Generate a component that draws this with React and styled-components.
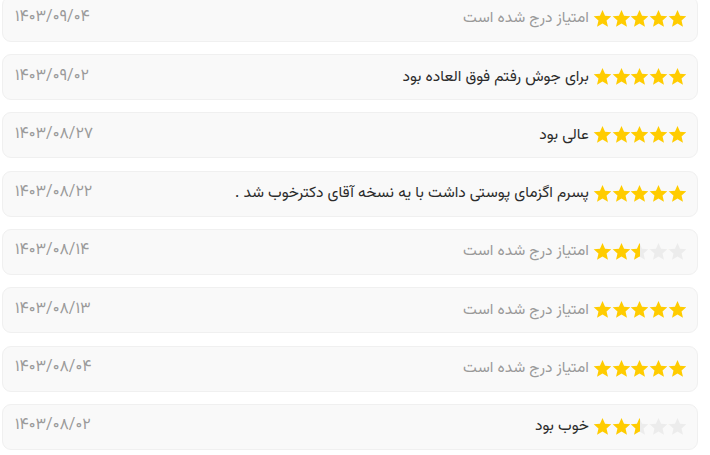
import styled, { createGlobalStyle } from 'styled-components';

const Global = createGlobalStyle`
  body {
    margin: 0;
    background: #ffffff;
    font-family: 'Vazirmatn', 'DejaVu Sans', 'Noto Sans', sans-serif;
    overflow: hidden;
  }
`;

const reviews = [
  { date: '۱۴۰۳/۰۹/۰۴', text: '', rate: 5 },
  { date: '۱۴۰۳/۰۹/۰۲', text: 'برای جوش رفتم فوق العاده بود', rate: 5 },
  { date: '۱۴۰۳/۰۸/۲۷', text: 'عالی بود', rate: 5 },
  { date: '۱۴۰۳/۰۸/۲۲', text: 'پسرم اگزمای پوستی داشت با یه نسخه آقای دکترخوب شد .', rate: 5 },
  { date: '۱۴۰۳/۰۸/۱۴', text: '', rate: 2.5 },
  { date: '۱۴۰۳/۰۸/۱۳', text: '', rate: 5 },
  { date: '۱۴۰۳/۰۸/۰۴', text: '', rate: 5 },
  { date: '۱۴۰۳/۰۸/۰۲', text: 'خوب بود', rate: 2.5 },
];

export default function App() {
  return (
    <>
      <Global />
      <List>
        {reviews.map((r, i) => (
          <Card key={i}>
            <Main>
              <Stars rate={r.rate} id={i} />
              <Comment $empty={!r.text}>{r.text || 'امتیاز درج شده است'}</Comment>
            </Main>
            <DateText>{r.date}</DateText>
          </Card>
        ))}
      </List>
    </>
  );
}

function Stars({ rate, id }) {
  return (
    <StarRow>
      {[0, 1, 2, 3, 4].map((n) => {
        const fill = Math.max(0, Math.min(1, rate - n));
        const gid = `half-${id}-${n}`;
        return (
          <svg key={n} width="19" height="19" viewBox="0 0 24 24">
            <defs>
              <linearGradient id={gid}>
                <stop offset={fill} stopColor="#ffcc00" />
                <stop offset={fill} stopColor="#ececec" />
              </linearGradient>
            </defs>
            <path
              d="M12 1.2l3.2 7.3 7.9.7-6 5.3 1.8 7.8L12 18.2l-6.9 4.1 1.8-7.8-6-5.3 7.9-.7z"
              fill={`url(#${gid})`}
            />
          </svg>
        );
      })}
    </StarRow>
  );
}

const List = styled.div`
  direction: rtl;
  width: 696px;
  margin: -4.33px 0 0 2px;
  display: flex;
  flex-direction: column;
  gap: 12.33px;
`;

const Card = styled.div`
  height: 46px;
  box-sizing: border-box;
  display: flex;
  align-items: center;
  justify-content: space-between;
  padding: 0 11px 0 12px;
  background: #f9f9f9;
  border: 1px solid #f0f0f0;
  border-radius: 9px;
`;

const Main = styled.div`
  display: flex;
  align-items: center;
  gap: 4px;
  margin-top: -1px;
`;

const StarRow = styled.div`
  direction: ltr;
  display: flex;
  margin-right: -1px;
  svg {
    display: block;
    margin: 0 -0.1px;
  }
`;

const Comment = styled.span`
  font-size: 15.5px;
  color: ${(p) => (p.$empty ? '#9a9a9a' : '#2b2b2b')};
`;

const DateText = styled.span`
  font-size: 16px;
  color: #9a9a9a;
  margin-top: -2px;
`;
